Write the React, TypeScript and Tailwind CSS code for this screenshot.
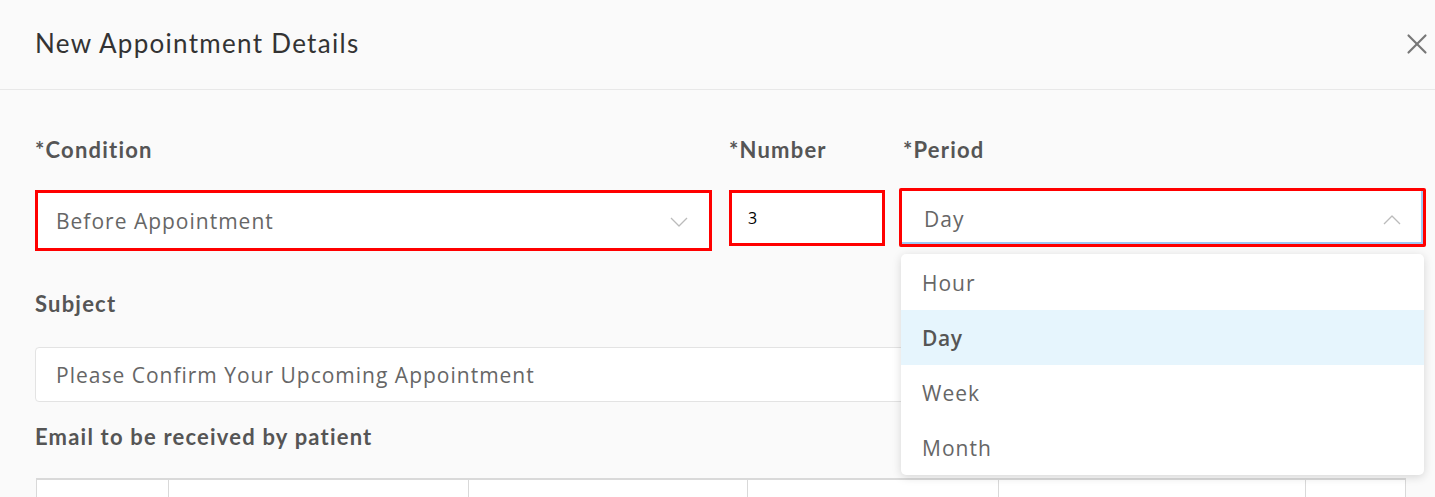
import { X } from 'lucide-react';

// ── Options for the period select ──────────────────────────────────────────────
const PERIODS = ['Hour', 'Day', 'Week', 'Month'];

const label = "font-['Lato',sans-serif] font-bold text-[22px] leading-[26px] tracking-[1.2px] text-[#555]";
const inputText = "font-['Open_Sans',sans-serif] text-[21px] tracking-[1px] text-[#666]";

function Chevron({ up = false }: { up?: boolean }) {
  return (
    <svg width="18" height="10" viewBox="0 0 18 10" fill="none" className="text-[#bbb]">
      <polyline
        points={up ? '1,9 9,1 17,9' : '1,1 9,9 17,1'}
        stroke="currentColor"
        strokeWidth="1.3"
        strokeLinejoin="round"
      />
    </svg>
  );
}

export default function App() {
  return (
    <div className="w-full h-[497px] overflow-hidden bg-[#fafafa]">
      {/* Header */}
      <div className="h-[90px] border-b border-[#e8e8e8] pl-[35px] pr-[1px] flex items-center justify-between">
        <h2 className="font-['Lato',sans-serif] text-[26px] text-[#333] tracking-[1.3px] -mt-[3px]">New Appointment Details</h2>
        <X className="w-[34px] h-[34px] text-[#777] -mt-[2px]" strokeWidth={1.5} />
      </div>

      <div className="pl-[35px] pr-[9px]">
        {/* Condition / Number / Period */}
        <div className="flex items-start mt-[47px]">
          <div className="w-[677px] flex flex-col">
            <span className={label}>*Condition</span>
            <div className="mt-[27px] h-[61px] border-[3px] border-[#ff0000] bg-white flex items-center justify-between pl-[18px] pr-[21px] pt-[2px]">
              <span className={inputText}>Before Appointment</span>
              <Chevron />
            </div>
          </div>

          <div className="w-[156px] ml-[17px] flex flex-col">
            <span className={label}>*Number</span>
            <div className="mt-[27px] h-[56px] border-[3px] border-[#ff0000] bg-white flex items-center pl-[16px]">
              <span className="font-['Open_Sans',sans-serif] text-[16px] text-black">3</span>
            </div>
          </div>

          <div className="flex-1 ml-[14px] flex flex-col relative">
            <span className={`${label} pl-[4px]`}>*Period</span>
            <div className="mt-[25px] h-[59px] border-[3px] border-[#ff0000] rounded-[2px] bg-white flex items-center justify-between pl-[22px] pr-[22px] pt-[4px] shadow-[inset_-2px_-2px_0_#9ec9f5]">
              <span className={inputText}>Day</span>
              <Chevron up />
            </div>

            {/* Open dropdown */}
            <div className="absolute left-[2px] right-[2px] top-[117px] z-10 bg-white rounded-[5px] shadow-[0_2px_10px_rgba(0,0,0,0.15)] overflow-hidden pt-[1px]">
              {PERIODS.map(p => (
                <div
                  key={p}
                  className={
                    p === 'Day'
                      ? "h-[55px] flex items-center pl-[21px] pt-[3px] bg-[#e6f5fd] font-['Open_Sans',sans-serif] text-[21px] tracking-[0.6px] text-[#555] font-semibold"
                      : "h-[55px] flex items-center pl-[21px] pt-[3px] font-['Open_Sans',sans-serif] text-[21px] tracking-[1px] text-[#666]"
                  }
                >
                  {p}
                </div>
              ))}
            </div>
          </div>
        </div>

        {/* Subject */}
        <div className="mt-[40px]">
          <span className={label}>Subject</span>
        </div>
        <div className="mt-[29px] h-[55px] mr-[3px] bg-white border border-[#e3e3e3] rounded-[4px] flex items-center pl-[20px] pt-[2px]">
          <span className={inputText}>Please Confirm Your Upcoming Appointment</span>
        </div>

        {/* Email body */}
        <div className="mt-[22px]">
          <span className={label}>Email to be received by patient</span>
        </div>
        <div className="mt-[27px] ml-[1px] w-[1370px] h-[30px] border-t-2 border-x border-[#d9d9d9] bg-white flex">
          <div className="w-[132px] border-r border-[#d9d9d9]" />
          <div className="w-[300px] border-r border-[#d9d9d9]" />
          <div className="w-[279px] border-r border-[#d9d9d9]" />
          <div className="w-[251px] border-r border-[#d9d9d9]" />
          <div className="w-[307px] border-r border-[#d9d9d9]" />
          <div className="flex-1" />
        </div>
      </div>
    </div>
  );
}
